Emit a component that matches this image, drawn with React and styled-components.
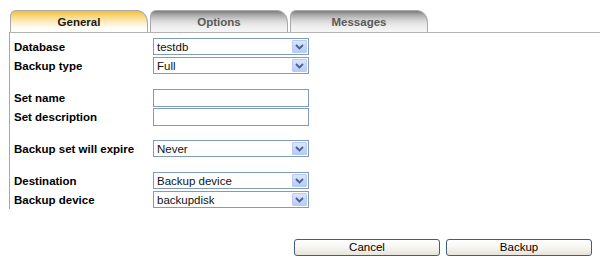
import React from "react";
import styled, { createGlobalStyle } from "styled-components";

const Global = createGlobalStyle`
  html, body { margin: 0; padding: 0; background: #ffffff; }
  body { font-family: "Liberation Sans", Arial, sans-serif; font-size: 11.5px; color: #000; }
`;

const Page = styled.div`
  width: 600px;
  height: 263px;
  box-sizing: border-box;
  padding: 9px 0 0 9px;
  display: flex;
  flex-direction: column;
`;

const TabBar = styled.div`
  display: flex;
  gap: 2px;
  padding-left: 1px;
  height: 23px;
  align-items: flex-end;
`;

const Tab = styled.div`
  width: 138px;
  height: 22px;
  box-sizing: border-box;
  border: 1px solid #a9a9a9;
  border-bottom: none;
  border-radius: 6px 11px 0 0 / 6px 13px 0 0;
  display: flex;
  align-items: center;
  justify-content: center;
  font-weight: bold;
  font-size: 11.5px;
  padding-top: 1px;
  color: ${(p) => (p.$active ? "#1a1a1a" : "#5a5a5a")};
  background: ${(p) =>
    p.$active
      ? "linear-gradient(to bottom, #f3bf3c 0%, #f8d77e 25%, #fcefc8 55%, #fffdf6 80%, #ffffff 100%)"
      : "linear-gradient(to bottom, #7c7c7c 0%, #a8a8a8 18%, #d6d6d6 45%, #ececec 70%, #f6f6f6 100%)"};
`;

const Panel = styled.div`
  border-top: 1px solid #b4b4b4;
  border-left: 1px solid #a8a8a8;
  padding: 4px 0 0 4px;
  display: flex;
  flex-direction: column;
  gap: 13px;
`;

const Group = styled.div`
  display: flex;
  flex-direction: column;
`;

const Row = styled.div`
  display: grid;
  grid-template-columns: 139px 156px;
  height: 19px;
  align-items: center;
`;

const Label = styled.label`
  font-weight: bold;
  font-size: 11.5px;
  color: #000;
  white-space: nowrap;
`;

const SelectBox = styled.div`
  height: 17px;
  box-sizing: border-box;
  border: 1px solid #7f9db9;
  background: #fff;
  display: flex;
  align-items: center;
  justify-content: space-between;
  padding: 0 1px 0 3px;
  font-size: 11.5px;
  color: #111;
`;

const ArrowBtn = styled.span`
  width: 15px;
  height: 13px;
  box-sizing: border-box;
  border: 1px solid #b9cbf3;
  border-radius: 1px;
  background: linear-gradient(to bottom, #dbe6fd 0%, #c4d5fb 60%, #b6cbf8 100%);
  display: flex;
  align-items: center;
  justify-content: center;
`;

const TextBox = styled.div`
  height: 18px;
  box-sizing: border-box;
  border: 1px solid #7f9db9;
  background: #fff;
`;

const Footer = styled.div`
  margin-top: 30px;
  display: flex;
  justify-content: flex-end;
  gap: 6px;
  padding-right: 8px;
`;

const Button = styled.button`
  width: 146px;
  height: 17px;
  box-sizing: border-box;
  border: 1px solid #3f5f7f;
  border-radius: 3px;
  background: linear-gradient(to bottom, #ffffff 0%, #f6f5f0 50%, #e6e4da 100%);
  font-family: "Liberation Sans", Arial, sans-serif;
  font-size: 11.5px;
  color: #000;
  padding: 0;
  line-height: 15px;
`;

const Chevron = () => (
  <svg width="9" height="6" viewBox="0 0 9 6">
    <path d="M1 1 L4.5 4.5 L8 1" fill="none" stroke="#4d6185" strokeWidth="1.8" />
  </svg>
);

const Select = ({ value }) => (
  <SelectBox>
    <span>{value}</span>
    <ArrowBtn>
      <Chevron />
    </ArrowBtn>
  </SelectBox>
);

export default function App() {
  return (
    <>
      <Global />
      <Page>
        <TabBar>
          <Tab $active>General</Tab>
          <Tab>Options</Tab>
          <Tab>Messages</Tab>
        </TabBar>
        <Panel>
          <Group>
            <Row>
              <Label>Database</Label>
              <Select value="testdb" />
            </Row>
            <Row>
              <Label>Backup type</Label>
              <Select value="Full" />
            </Row>
          </Group>
          <Group>
            <Row>
              <Label>Set name</Label>
              <TextBox />
            </Row>
            <Row>
              <Label>Set description</Label>
              <TextBox />
            </Row>
          </Group>
          <Group>
            <Row>
              <Label>Backup set will expire</Label>
              <Select value="Never" />
            </Row>
          </Group>
          <Group>
            <Row>
              <Label>Destination</Label>
              <Select value="Backup device" />
            </Row>
            <Row>
              <Label>Backup device</Label>
              <Select value="backupdisk" />
            </Row>
          </Group>
        </Panel>
        <Footer>
          <Button>Cancel</Button>
          <Button>Backup</Button>
        </Footer>
      </Page>
    </>
  );
}
